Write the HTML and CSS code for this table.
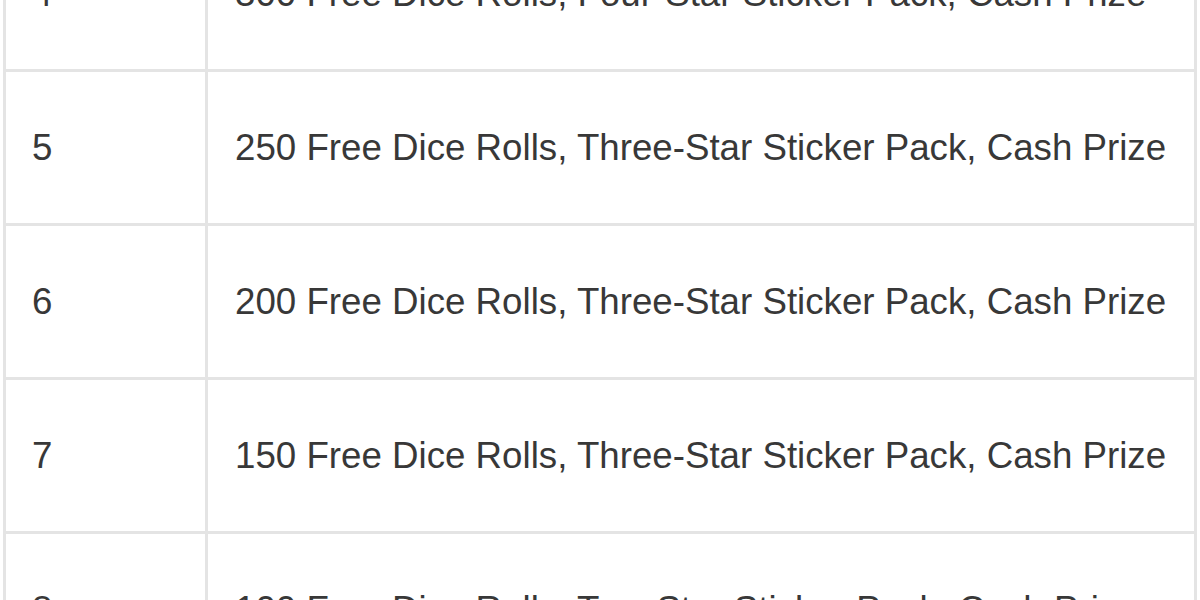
FILE: index.html
```html
<!DOCTYPE html>
<html lang="en">

<head>
    <meta charset="UTF-8">
    <meta name="viewport" content="width=device-width, initial-scale=1.0">
    <title>Rewards</title>
    <link rel="stylesheet" href="styles.css">
</head>

<body>
    <div class="rewards">
        <div class="row">
            <div class="cell num">4</div>
            <div class="cell prize">300 Free Dice Rolls, Four-Star Sticker Pack, Cash Prize</div>
        </div>
        <div class="row">
            <div class="cell num">5</div>
            <div class="cell prize">250 Free Dice Rolls, Three-Star Sticker Pack, Cash Prize</div>
        </div>
        <div class="row">
            <div class="cell num">6</div>
            <div class="cell prize">200 Free Dice Rolls, Three-Star Sticker Pack, Cash Prize</div>
        </div>
        <div class="row">
            <div class="cell num">7</div>
            <div class="cell prize">150 Free Dice Rolls, Three-Star Sticker Pack, Cash Prize</div>
        </div>
        <div class="row">
            <div class="cell num">8</div>
            <div class="cell prize">100 Free Dice Rolls, Two-Star Sticker Pack, Cash Prize</div>
        </div>
    </div>
</body>

</html>
```

FILE: styles.css
```css
* {
    margin: 0;
    padding: 0;
    box-sizing: border-box;
}

body {
    background: #fff;
    overflow: hidden;
    font-family: "Liberation Sans", Arial, sans-serif;
    color: #383838;
}

/* the table is scrolled, row 4 is cut off at the top */
.rewards {
    width: 1194px;
    margin: -82px 0 0 3px;
    border-left: 3px solid #e4e4e4;
    border-right: 3px solid #e4e4e4;
}

.rewards .row {
    display: grid;
    grid-template-columns: 202px 1fr;
    height: 154px;
    border-bottom: 3px solid #e4e4e4;
}

.rewards .cell {
    display: flex;
    align-items: center;
    font-size: 36.7px;
    white-space: nowrap;
}

.rewards .num {
    padding-left: 26px;
    border-right: 3px solid #e4e4e4;
}

.rewards .prize {
    padding-left: 27px;
}
```
